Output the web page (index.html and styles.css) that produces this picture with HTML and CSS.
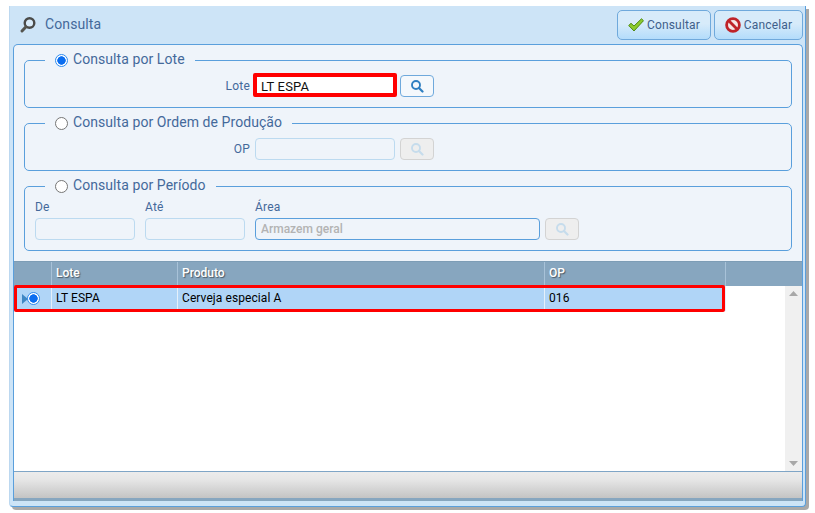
FILE: index.html
```html
<!DOCTYPE html>
<html lang="pt">
<head>
<meta charset="utf-8">
<title>Consulta</title>
<link rel="stylesheet" href="styles.css">
</head>
<body>
<div class="window">
  <header class="topbar">
    <svg class="title-icon" width="18" height="18" viewBox="0 0 18 18"><circle cx="10.5" cy="7" r="4.8" fill="#fff" fill-opacity=".25" stroke="#4a4a48" stroke-width="2.4"/><path d="M7 10.8 3 15" stroke="#55554f" stroke-width="3" stroke-linecap="round"/></svg>
    <span class="title">Consulta</span>
    <div class="actions">
      <button class="action action-ok" type="button">
        <svg width="16" height="14" viewBox="0 0 16 14"><path d="M.7 7.5 3 5.3 6 8 13.5.8 15.5 2.7 6 13Z" fill="#8ccb2e" stroke="#4f8a14" stroke-width="1"/></svg>
        Consultar
      </button>
      <button class="action action-cancel" type="button">
        <svg width="16" height="16" viewBox="0 0 16 16"><circle cx="8" cy="8" r="6.4" fill="#f6e6e6" stroke="#bf2329" stroke-width="2.8"/><path d="M3.8 3.8 12.2 12.2" stroke="#bf2329" stroke-width="2.8"/></svg>
        Cancelar
      </button>
    </div>
  </header>
  <main class="panel">
    <div class="filters">
      <fieldset class="group group-lote">
        <legend><span class="radio radio-on"></span>Consulta por Lote</legend>
        <div class="line">
          <label class="inline-label">Lote</label>
          <div class="input-wrap"><input class="input input-active" type="text" value="LT ESPA"><span class="mark mark-input"></span></div>
          <button class="search" type="button"><svg width="14" height="14" viewBox="0 0 14 14"><circle cx="6" cy="6" r="4" fill="none" stroke="#2f7fc1" stroke-width="1.9"/><path d="M9 9 12.5 12.5" stroke="#2f7fc1" stroke-width="2.2" stroke-linecap="round"/></svg></button>
        </div>
      </fieldset>
      <fieldset class="group group-op">
        <legend><span class="radio"></span>Consulta por Ordem de Produção</legend>
        <div class="line">
          <label class="inline-label">OP</label>
          <input class="input input-off" type="text" disabled>
          <button class="search search-off" type="button" disabled><svg width="14" height="14" viewBox="0 0 14 14"><circle cx="6" cy="6" r="4" fill="none" stroke="#c6dcec" stroke-width="1.9"/><path d="M9 9 12.5 12.5" stroke="#c6dcec" stroke-width="2.2" stroke-linecap="round"/></svg></button>
        </div>
      </fieldset>
      <fieldset class="group group-periodo">
        <legend><span class="radio"></span>Consulta por Período</legend>
        <div class="period">
          <div class="field"><label>De</label><input class="input input-off input-date" type="text" disabled></div>
          <div class="field"><label>Até</label><input class="input input-off input-date" type="text" disabled></div>
          <div class="field"><label>Área</label><div class="area-line"><input class="input input-area" type="text" value="Armazem geral" disabled>
            <button class="search search-off" type="button" disabled><svg width="14" height="14" viewBox="0 0 14 14"><circle cx="6" cy="6" r="4" fill="none" stroke="#c6dcec" stroke-width="1.9"/><path d="M9 9 12.5 12.5" stroke="#c6dcec" stroke-width="2.2" stroke-linecap="round"/></svg></button></div></div>
        </div>
      </fieldset>
    </div>
    <section class="grid">
      <div class="grid-head">
        <div class="cell c0"></div>
        <div class="cell c1">Lote</div>
        <div class="cell c2">Produto</div>
        <div class="cell c3">OP</div>
      </div>
      <div class="grid-body">
        <div class="rows">
          <div class="row">
            <div class="cell c0"><svg class="row-arrow" width="6" height="10" viewBox="0 0 6 10"><path d="M0 0 6 5 0 10Z" fill="#3f87c4"/></svg><span class="radio radio-on radio-row"></span></div>
            <div class="cell c1">LT ESPA</div>
            <div class="cell c2">Cerveja especial A</div>
            <div class="cell c3">016</div>
          </div>
          <span class="mark mark-row"></span>
        </div>
        <div class="scrollbar">
          <svg width="9" height="5" viewBox="0 0 9 5"><path d="M0 5 4.5 0 9 5Z" fill="#a8a8a8"/></svg>
          <svg width="9" height="5" viewBox="0 0 9 5"><path d="M0 0 4.5 5 9 0Z" fill="#a8a8a8"/></svg>
        </div>
      </div>
      <div class="grid-foot"></div>
    </section>
  </main>
</div>
</body>
</html>
```
FILE: styles.css
```css
* { box-sizing: border-box; }
html, body { margin: 0; padding: 0; background: #fff; }
body {
  width: 815px;
  height: 513px;
  overflow: hidden;
  font-family: Roboto, "Liberation Sans", sans-serif;
  color: #3f5f8a;
}
.window {
  margin: 6px 0 0 9px;
  width: 797px;
  height: 501px;
  padding: 0 2px 5px 3px;
  background: #cde4f7;
  border-right: 1px solid #5a9fdc;
  border-bottom: 1px solid #5a9fdc;
  border-left: 1px solid #bcd8f0;
  border-radius: 0 0 4px 4px;
  box-shadow: 3px 3px 0 #a9a9a9;
  display: flex;
  flex-direction: column;
}
.topbar {
  height: 38px;
  flex: none;
  display: flex;
  align-items: center;
  padding-left: 6px;
}
.title-icon { flex: none; }
.title { margin-left: 8px; padding-bottom: 2px; font-size: 14px; letter-spacing: .1px; color: #44699a; }
.actions { margin-left: auto; display: flex; gap: 3px; }
.action {
  height: 30px;
  padding: 0;
  border: 1px solid #6fa9dc;
  border-radius: 5px;
  background: linear-gradient(#d7ebfa 0%, #d7ebfa 45%, #b3dcfb 100%);
  color: #3f5f8a;
  font: 12px Roboto, "Liberation Sans", sans-serif;
  letter-spacing: .15px;
  display: flex;
  align-items: center;
  justify-content: center;
  gap: 3px;
}
.action-ok { width: 94px; }
.action-cancel { width: 89px; }
.panel {
  flex: 1;
  border: 1px solid #5a9fdc;
  border-bottom: 0;
  border-radius: 5px 5px 0 0;
  background: #eff4fa;
  display: flex;
  flex-direction: column;
  overflow: hidden;
}
.filters {
  height: 216px;
  flex: none;
  padding: 6px 10px 0;
  display: flex;
  flex-direction: column;
  gap: 6px;
}
.group {
  margin: 0;
  padding: 0 10px;
  border: 1px solid #5a9fdc;
  border-radius: 5px;
  min-width: 0;
}
.group legend {
  margin-left: 10px;
  padding: 0 10px 2px;
  height: 18px;
  line-height: 16px;
  font-size: 14px;
  letter-spacing: .07px;
  color: #44699a;
  display: flex;
  align-items: center;
  gap: 5px;
}
.group-lote { height: 57px; }
.group-op { height: 57px; }
.group-periodo { height: 74px; }
.radio {
  width: 13px;
  height: 13px;
  flex: none;
  display: inline-block;
  border-radius: 50%;
  border: 1px solid #767676;
  background: #fff;
}
.group legend .radio { margin-top: 2px; }
.radio-on {
  border-color: #2f8cf0;
  background: radial-gradient(circle, #0a6df0 0 3.9px, #fff 4.5px);
}
.line {
  display: flex;
  align-items: center;
  padding-top: 5px;
  padding-left: 185px;
  height: 29px;
}
.inline-label {
  width: 30px;
  text-align: right;
  font-size: 12px;
  letter-spacing: .2px;
  color: #44699a;
  margin-right: 5px;
}
.input-wrap { position: relative; width: 140px; height: 22px; flex: none; }
.input {
  height: 22px;
  padding: 0 5px;
  border-radius: 4px;
  border: 1px solid #bcdaf0;
  outline: 0;
  font: 12px Roboto, "Liberation Sans", sans-serif;
  display: block;
}
.input-active { width: 140px; background: #fff; color: #111; border-color: #fff; font-size: 13px; letter-spacing: .2px; }
.input-off { width: 140px; background: #eff4fa; flex: none; }
.input-date { width: 100px; }
.input-area {
  width: 285px;
  background: #eff4fa;
  border-color: #5a9fdc;
  color: #b3b3b3;
  font-weight: 500;
  -webkit-text-fill-color: #b3b3b3;
  opacity: 1;
}
.search {
  width: 34px;
  height: 22px;
  margin-left: 5px;
  padding: 0;
  flex: none;
  border: 1px solid #6fa9dc;
  border-radius: 4px;
  background: #f4f8fc;
  display: flex;
  align-items: center;
  justify-content: center;
}
.search-off { background: #eeeeee; border-color: #d3d3d3; }
.period { display: flex; gap: 10px; margin-top: 2px; }
.field label {
  display: block;
  height: 21px;
  line-height: 21px;
  font-size: 12px;
  letter-spacing: .2px;
  color: #44699a;
}
.area-line { display: flex; }
.grid {
  flex: 1;
  display: flex;
  flex-direction: column;
  min-height: 0;
}
.grid-head {
  height: 25px;
  flex: none;
  display: flex;
  background: #87a6bf;
  border-top: 1px solid #7d9db6;
  color: #fff;
  font-size: 12px;
  font-weight: 500;
  text-shadow: 1px 1px 1px #4c5a66;
}
.cell {
  display: flex;
  align-items: center;
  padding: 0 0 2px 4px;
  border-right: 1px solid #a8c2d8;
  flex: none;
}
.c0 { width: 38px; padding-left: 0; }
.c1 { width: 126px; }
.c2 { width: 367px; }
.c3 { width: 181px; }
.grid-body { flex: 1; min-height: 0; display: flex; background: #fff; }
.rows { flex: 1; position: relative; }
.row {
  height: 25px;
  display: flex;
  background: #b0d5f7;
  width: 712px;
  color: #000;
  font-size: 12px;
  letter-spacing: .08px;
}
.row .cell { border-right-color: #e5f0fa; }
.row-arrow { margin-left: 8px; margin-top: 2px; }
.radio-row { margin-left: -1px; margin-top: 2px; }
.scrollbar {
  width: 17px;
  flex: none;
  background: #f0f0f0;
  display: flex;
  flex-direction: column;
  justify-content: space-between;
  align-items: center;
  padding: 5px 0;
}
.grid-foot {
  height: 30px;
  flex: none;
  border-top: 1px solid #7fa5c6;
  border-bottom: 3px solid #87a6bf;
  background: linear-gradient(#ececec, #e6e6e6 30%, #c4c4c4);
}
.mark { position: absolute; border-style: solid; border-color: #f00; border-radius: 2px; pointer-events: none; }
.mark-input { left: -2px; top: -2px; right: -2px; bottom: 0; border-width: 4px; }
.mark-row { left: 0; top: -1px; width: 711px; height: 27px; border-width: 3px; }
```
